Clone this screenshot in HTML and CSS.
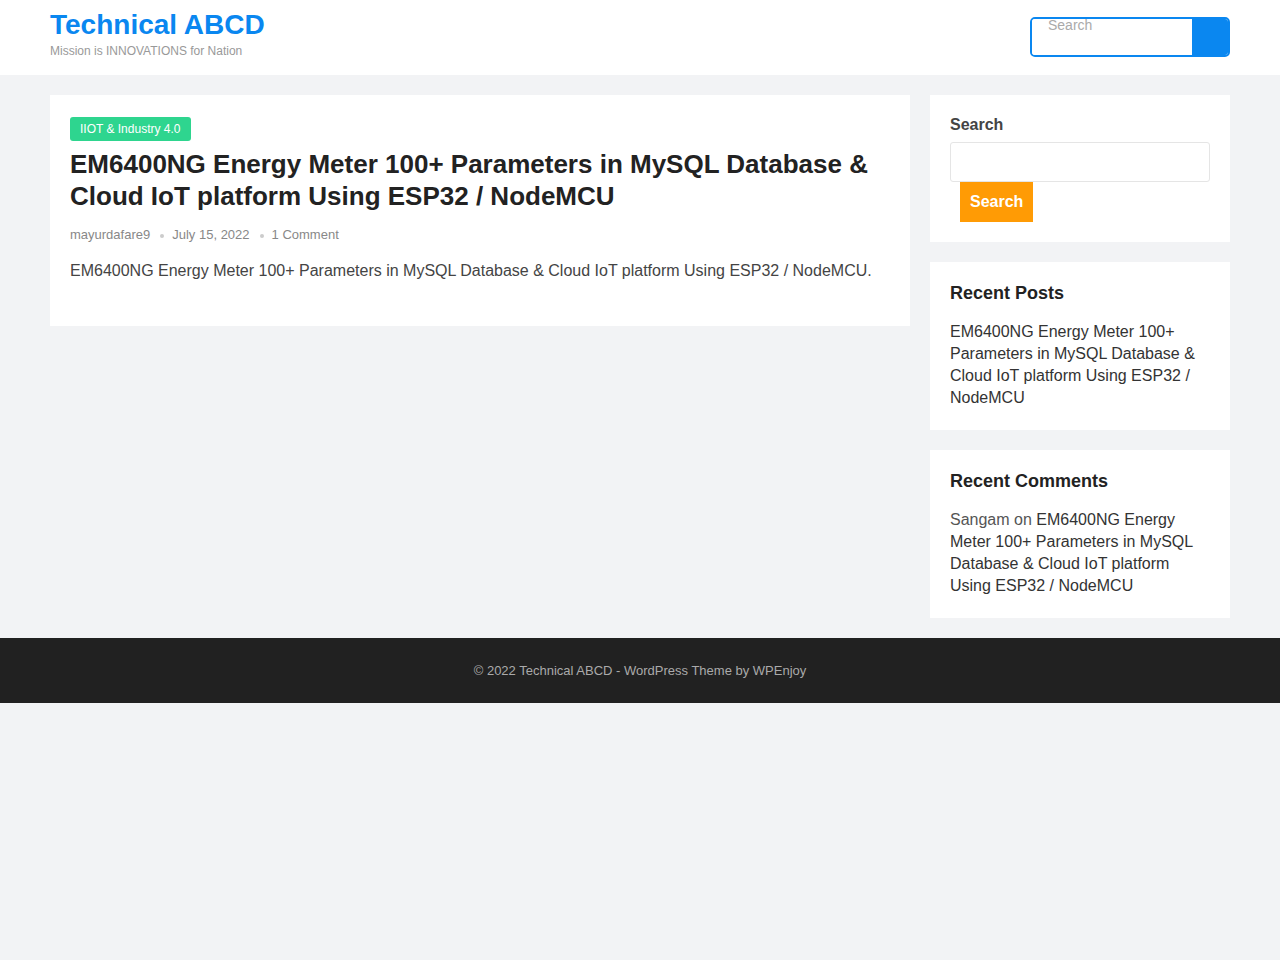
FILE: index.html
```html
<!DOCTYPE html>
<html>
  <head>
    <meta charset="UTF-8">
    <title>Technical ABCD</title>
    <link rel="stylesheet" href="styles.css">
  </head>
  <body>
    <header class="site-header">
      <div class="container header-inner">
        <div class="branding">
          <a class="site-title" href="#">Technical ABCD</a>
          <p class="site-desc">Mission is INNOVATIONS for Nation</p>
        </div>
        <form class="header-search" action="">
          <input type="search" placeholder="Search">
          <button type="submit"></button>
        </form>
      </div>
    </header>

    <div class="container site-content">
      <main class="main">
        <article class="post">
          <a class="cat" href="#">IIOT &amp; Industry 4.0</a>
          <h2 class="post-title">EM6400NG Energy Meter 100+ Parameters in MySQL Database &amp; Cloud IoT platform Using ESP32 / NodeMCU</h2>
          <div class="meta">
            <span>mayurdafare9</span>
            <span class="dot"></span>
            <span>July 15, 2022</span>
            <span class="dot"></span>
            <span>1 Comment</span>
          </div>
          <p class="excerpt">EM6400NG Energy Meter 100+ Parameters in MySQL Database &amp; Cloud IoT platform Using ESP32 / NodeMCU.</p>
        </article>
      </main>

      <aside class="sidebar">
        <section class="widget">
          <h4 class="search-label">Search</h4>
          <form class="widget-search" action="">
            <input type="search">
            <button type="submit">Search</button>
          </form>
        </section>

        <section class="widget">
          <h3 class="widget-title">Recent Posts</h3>
          <ul class="widget-list">
            <li><a href="#">EM6400NG Energy Meter 100+ Parameters in MySQL Database &amp; Cloud IoT platform Using ESP32 / NodeMCU</a></li>
          </ul>
        </section>

        <section class="widget">
          <h3 class="widget-title">Recent Comments</h3>
          <ul class="widget-list">
            <li class="comment-item">Sangam on <a href="#">EM6400NG Energy Meter 100+ Parameters in MySQL Database &amp; Cloud IoT platform Using ESP32 / NodeMCU</a></li>
          </ul>
        </section>
      </aside>
    </div>

    <footer class="site-footer">
      <p>&copy; 2022 Technical ABCD - WordPress Theme by WPEnjoy</p>
    </footer>
  </body>
</html>
```

FILE: styles.css
```css
* {
  box-sizing: border-box;
}

body {
  margin: 0;
  background-color: #f2f3f5;
  font-family: "Liberation Sans", Arial, sans-serif;
  color: #333;
}

a {
  text-decoration: none;
  color: inherit;
}

.container {
  width: 1180px;
  margin: 0 auto;
}

/* cabecera */
.site-header {
  background-color: #fff;
  height: 75px;
}

.header-inner {
  display: flex;
  justify-content: space-between;
  align-items: flex-start;
}

.branding {
  padding-top: 8px;
}

.site-title {
  display: block;
  font-size: 28px;
  font-weight: bold;
  line-height: 34px;
  color: #0a87f0;
}

.site-desc {
  margin: 1px 0 0;
  font-size: 12px;
  line-height: 16px;
  color: #999;
}

.header-search {
  display: flex;
  width: 200px;
  height: 40px;
  margin-top: 17px;
  border: 2px solid #0a87f0;
  border-radius: 5px;
  overflow: hidden;
}

.header-search input {
  flex: 1;
  min-width: 0;
  height: 36px;
  border: 0;
  outline: 0;
  padding: 0 16px 24px;
  font-family: inherit;
  font-size: 14px;
  color: #333;
}

.header-search input::placeholder {
  color: #aaa;
}

.header-search button {
  width: 36px;
  border: 0;
  background-color: #0a87f0;
}

/* contenido */
.site-content {
  display: flex;
  gap: 20px;
  align-items: flex-start;
  padding: 20px 0;
}

.main {
  width: 860px;
}

.post {
  background-color: #fff;
  padding: 22px 20px 43px;
}

.cat {
  display: inline-block;
  background-color: #2ed58f;
  color: #fff;
  font-size: 12px;
  line-height: 16px;
  padding: 4px 10px;
  border-radius: 3px;
}

.post-title {
  margin: 7px 0 0;
  font-size: 26px;
  line-height: 32px;
  font-weight: bold;
  color: #222;
}

.meta {
  display: flex;
  align-items: center;
  margin-top: 13px;
  font-size: 13px;
  line-height: 20px;
  color: #888;
}

.dot {
  width: 4px;
  height: 4px;
  margin: 2px 8px 0 10px;
  border-radius: 50%;
  background-color: #ccc;
}

.excerpt {
  margin: 14px 0 0;
  font-size: 16px;
  line-height: 24px;
  color: #444;
}

/* barra lateral */
.sidebar {
  width: 300px;
  display: flex;
  flex-direction: column;
  gap: 20px;
}

.widget {
  background-color: #fff;
  padding: 20px 20px 21px;
}

.search-label {
  margin: 1px 0 8px;
  font-size: 16px;
  line-height: 18px;
  font-weight: bold;
  color: #444;
}

.widget-search input {
  display: block;
  width: 100%;
  height: 40px;
  border: 1px solid #e5e5e5;
  border-radius: 3px;
  outline: 0;
}

.widget-search button {
  display: block;
  margin-left: 10px;
  height: 40px;
  padding: 0 10px;
  border: 0;
  background-color: #ff9b05;
  color: #fff;
  font-family: inherit;
  font-size: 16px;
  font-weight: bold;
}

.widget:first-child {
  padding-bottom: 20px;
}

.widget-title {
  margin: 0 0 17px;
  font-size: 18px;
  line-height: 22px;
  font-weight: bold;
  color: #222;
}

.widget-list {
  list-style: none;
  margin: 0;
  padding: 0;
  font-size: 16px;
  line-height: 22px;
  color: #333;
}

.comment-item {
  color: #555;
}

.comment-item a {
  color: #333;
}

/* pie */
.site-footer {
  background-color: #212121;
  height: 65px;
  display: flex;
  align-items: center;
  justify-content: center;
}

.site-footer p {
  margin: 0;
  font-size: 13px;
  color: #aaa;
}
```
